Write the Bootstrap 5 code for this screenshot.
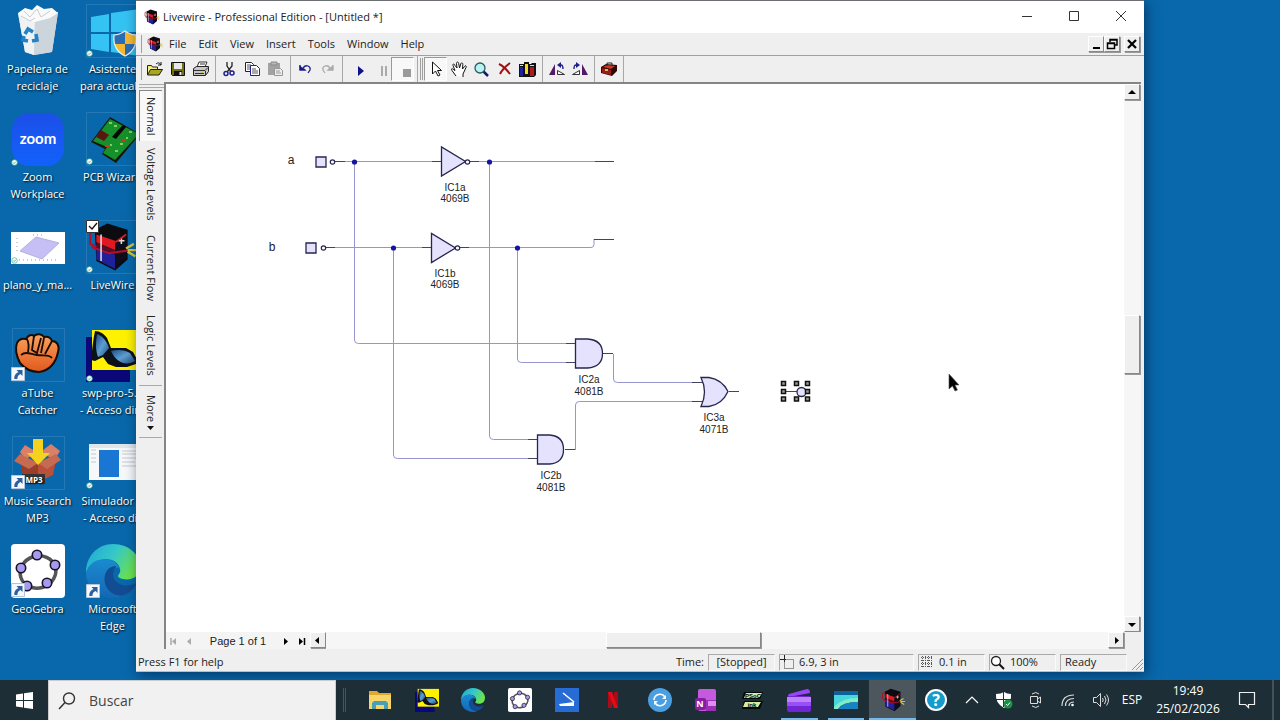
<!DOCTYPE html>
<html lang="es">
<head>
<meta charset="utf-8">
<meta name="viewport" content="width=device-width, initial-scale=1">
<title>Livewire - Professional Edition</title>
<link href="https://cdn.jsdelivr.net/npm/bootstrap@5.3.0/dist/css/bootstrap.min.css" rel="stylesheet">
<style>
  :root { --ui: "Open Sans", "Noto Sans", sans-serif; --face: #efefef; --shade: #a0a0a0; }
  body { font-family: var(--ui); font-size: 11px; line-height: 16px; color: #222; background: #0868ab; }
  button { font: inherit; color: inherit; background: none; border: 0; padding: 0; }
  svg { display: block; flex-shrink: 0; }

  /* Desktop */
  .desk-icons { grid-template-columns: 75px 75px; grid-auto-rows: 108px; width: 150px; padding-top: 4px; }
  .desk-item { color: #fff; text-shadow: 1px 1px 2px #000; text-decoration: none; display: flex; flex-direction: column; align-items: center; text-align: center; line-height: 17px; white-space: nowrap; }
  .desk-item:hover { color: #fff; }
  .desk-item svg { width: 54px; height: 54px; margin-bottom: 2px; }

  /* Application window */
  .app-win { inset: 0 136px 8px 136px; background: var(--face); border-top: 1px solid #6b6f73; border-bottom: 1px solid #8ad0e0; box-shadow: 2px 3px 12px rgba(0,20,50,.55); }
  .title-bar { height: 32px; background: #fff; padding-left: 8px; gap: 3px; }
  .title-bar .controls button { width: 47px; height: 30px; }
  .menu-bar { height: 23px; padding-left: 5px; border-bottom: 1px solid var(--shade); }
  .menu-bar .menu-item { padding: 0 6px; }
  .grip { width: 2px; border-left: 1px solid var(--shade); align-self: stretch; margin: 2px 0; }
  .mdi button, .sb-btn { width: 16px; height: 16px; background: var(--face); border: 1px solid; border-color: #fff #888 #888 #fff; box-shadow: 1px 1px 0 #999; }
  .tool-bar { height: 26px; padding-left: 5px; }
  .tool-bar button { width: 23px; height: 24px; display: flex; align-items: center; justify-content: center; }
  .tool-bar .pressed { background: #f8f8f8; border: 1px solid; border-color: #999 #fff #fff #999; }
  .tb-sep { width: 6px; height: 26px; background: linear-gradient(#a8a8a8,#a8a8a8) 3px 0 / 1px 100% no-repeat; }

  .work-area { padding-right: 3px; }
  .side-tabs { width: 28px; padding-left: 3px; }
  .side-tabs button { writing-mode: vertical-rl; width: 23px; text-align: left; line-height: 20px; padding: 7px 0; }
  .side-tabs .on { background: #f8f8f8; border-left: 1px solid #888; border-top: 1px solid #888; padding: 6px 0; }
  .side-grip { height: 4px; border: 1px solid #aaa; border-width: 1px 0; margin: 2px 0; }
  .side-tabs .more-tab { border: 1px solid #aaa; border-width: 1px 0; margin-top: 2px; padding: 9px 0 6px; }
  .view { border-left: 2px solid #858585; border-top: 2px solid #858585; }
  .sheet { background: #fff; }
  .sheet svg text { font-family: "Liberation Sans", Arial, sans-serif; font-size: 10px; fill: #222; text-anchor: middle; }
  .sheet svg .net-name { font-size: 12px; }
  .track { background: #f6f6f6; }
  .v-bar { width: 17px; }
  .h-bar { height: 17px; }
  .thumb { background: var(--face); border: 1px solid; border-color: #fff #888 #888 #fff; box-shadow: 1px 1px 0 #999; }
  .pager { width: 144px; background: #f4f4f4; font-family: "Liberation Sans", Arial, sans-serif; }
  .pager button { width: 16px; height: 16px; }

  .status-bar { height: 18px; margin-top: 4px; padding-left: 2px; }
  .cellbox { height: 17px; border: 1px solid; border-color: #aaa #fafafa #fafafa #aaa; }

  /* Taskbar */
  .task-bar { height: 40px; background: #1e2e36; color: #fff; font-size: 12px; }
  .task-bar button { height: 40px; display: flex; align-items: center; justify-content: center; }
  .find-box { width: 288px; background: #f1f1f1; border: 1px solid #ccc; border-bottom: 0; }
  .find-box input { background: none; border: 0; outline: 0; padding: 0; font-size: 14px; width: 200px; color: #333; }
  .find-box input::placeholder { color: #444; opacity: 1; }
  .pinned { width: 559px; }
  .pinned button { flex: 1 1 0; position: relative; }
  .pinned .running::after { content: ""; position: absolute; bottom: 0; left: 5px; right: 5px; height: 2px; background: #76b9ed; }
  .pinned .focused { background: #4b575d; }
  .pinned .focused::after { left: 0; right: 0; }
  .tray button { width: 32px; }
</style>
</head>
<body>
<svg width="0" height="0" class="position-absolute" aria-hidden="true">
  <defs>
    <linearGradient id="edgeTop" x1="0" y1="0" x2="1" y2=".4"><stop offset="0" stop-color="#1fa5d8"/><stop offset=".55" stop-color="#35c8c8"/><stop offset="1" stop-color="#6be34f"/></linearGradient>
    <linearGradient id="edgeLow" x1="0" y1="0" x2="0" y2="1"><stop offset="0" stop-color="#1a8bd0"/><stop offset="1" stop-color="#1467b4"/></linearGradient>
    <linearGradient id="zoomFill" x1="0" y1="0" x2="0" y2="1"><stop offset="0" stop-color="#1c4fe8"/><stop offset="1" stop-color="#1261fb"/></linearGradient>
    <linearGradient id="paw" x1="0" y1="0" x2="0" y2="1"><stop offset="0" stop-color="#f9a35c"/><stop offset="1" stop-color="#e1581c"/></linearGradient>
    <linearGradient id="wing" x1="0" y1="0" x2="1" y2="1"><stop offset="0" stop-color="#1d4c88"/><stop offset=".5" stop-color="#5d9fd2"/><stop offset="1" stop-color="#1f4a7c"/></linearGradient>
    <symbol id="synced" viewBox="0 0 8 8"><circle cx="4" cy="4" r="3.200" fill="#fff" stroke="#3bb58a" stroke-width=".8"/><path d="M2.400 4l1.200 1.200 2-2.200" fill="none" stroke="#2a9a70" stroke-width=".9"/></symbol>
    <symbol id="shortcut" viewBox="0 0 14 14"><path d="M.5.5h13v13H.5z" fill="#f4f7fb" stroke="#b5c5d8"/><path d="M5.500 3H11.500V9L9.600 7.100C7.500 8 6.400 9.500 6.400 12H3.300C2.900 8.600 4.600 6.300 7.400 5z" fill="#2f5e9e"/></symbol>
    <symbol id="lw" viewBox="0 0 32 32"><path d="M5 5l8-4 13 4v19l-8 7-12-6z" fill="#0c0c10"/><path d="M6 8l12 4v6L6 13z" fill="#e01820"/><path d="M6 13l12 5v3L6 16z" fill="#5a0c28"/><path d="M6 16l12 5v9L6 24z" fill="#20209a"/><path d="M18 13l7-5v15l-7 6z" fill="#0e0e1c"/><path d="M5 6L2 7v7l4 2M3 16l11 4 14-2" fill="none" stroke="#b01028" stroke-width="1.300"/><path d="M9 8v17M20 12h4M22 10v4" stroke="#ddd" fill="none"/><path d="M18 13l7-5" stroke="#e02030"/><path d="M25 17l5-3M26 18h6M26 19l5 3" stroke="#d8c838" stroke-width="1.500"/></symbol>
    <symbol id="edge" viewBox="0 0 32 32"><path d="M0 17C0 7 7 0 16 0c10 0 16 7 16 13 0 5-3 8-8 8-3 0-5-1-5-2s2-2 1-5c-1-3-4-5-8-5C6 9 2 12 0 17z" fill="url(#edgeTop)"/><path d="M0 17C2 11 6 9 11 9c5 0 8 2 9 6-3-3-9-1-9 6 0 5 4 9 10 10-2 1-4 1-5 1C7 32 0 25 0 17z" fill="url(#edgeLow)"/><path d="M18 13c-4 0-7 3-7 8 0 6 6 11 12 9 3-1 6-4 7-7-7 4-14 0-14-5 0-2 1-4 2-5z" fill="#124c92"/></symbol>
    <symbol id="ggb" viewBox="0 0 54 54"><rect width="54" height="54" rx="4" fill="#fff"/><ellipse cx="27" cy="28" rx="18" ry="16" transform="rotate(-18 27 28)" fill="none" stroke="#555" stroke-width="3.500"/><g fill="#a59af0" stroke="#171525" stroke-width="1.600"><circle cx="26" cy="11" r="4.700"/><circle cx="44" cy="21" r="4.700"/><circle cx="36" cy="39" r="4.700"/><circle cx="16" cy="42" r="4.700"/><circle cx="10" cy="24" r="4.700"/></g></symbol>
    <symbol id="fly" viewBox="0 0 54 54"><path d="M0 9h44v45H0z" fill="#0a0878"/><path d="M6 2h48v40H6z" fill="#fff200"/><path d="M9 3c5 0 9 3 12 7l4 10 15 0 7 4 5 9-2 3-9 3-11 0-8-3-5-7-8 4-4-1C6 23 7 12 9 3z" fill="#0c1018"/><path d="M11 6c6 2 10 8 12 14l-6 7-5 2c-3-8-2-16-1-23z" fill="url(#wing)"/><path d="M25 23c7-2 14-1 19 2l5 8c-8 5-18 3-24-10z" fill="url(#wing)"/></symbol>
  </defs>
</svg>

<div class="d-flex flex-column vh-100 overflow-hidden">
  <main class="flex-grow-1 position-relative overflow-hidden">
    <nav class="desk-icons d-grid" aria-label="Escritorio">
      <a class="desk-item" href="#"><svg viewBox="0 0 54 54"><path d="M7 9l40-1-6 40-18 3-9-3z" fill="#dce3e8"/><path d="M7 9l17 5-1 37-9-3z" fill="#eef2f4"/><path d="M24 14l23-6-6 40-18 3z" fill="#ccd5dc"/><path d="M7 9l7-5 7 2 5-5 7 4 8-1 6 5-8 5-15 4-12-3z" fill="#fafafa"/><path d="M13 7l6 6 7-8 4 8 9-6M10 12l9 5 5-3" fill="none" stroke="#c5ccd2"/><g fill="none" stroke="#2481c4" stroke-width="3.600"><path d="M14 30l3-5 5 3M25 30l1 6-5 1M17 37l-5-1 1-4"/></g></svg><span>Papelera de<br>reciclaje</span></a>
      <a class="desk-item" href="#"><svg viewBox="0 0 54 54"><path d="M.5.5h53v53H.5z" fill="none" stroke="#3a83bc" stroke-opacity=".6"/><path d="M5 13l18-3v18H5zM25 9l29-4v23H25zM5 30h18v18l-18-3zM25 30h29v22l-29-4z" fill="#35c3f3"/><path d="M39 27v13H28.500c-.7-3-.6-6-.5-9 5 0 8-2 11-4zM39 40h10c-1 5-5 9-10 12z" fill="#2a6db5"/><path d="M39 27c3 2 6 4 11 4 .3 3 0 6-1 9H39zM28.500 40H39v12c-6-3-9-7-10.500-12z" fill="#f6b82e"/><path d="M28 31c5 0 8-2 11-4 3 2 6 4 11 4 1 10-3 17-11 21-8-4-12-11-11-21z" fill="none" stroke="#eee" stroke-width="1.200"/><use href="#synced" x="0" y="46" width="7" height="7"/></svg><span>Asistente<br>para actualiz</span></a>
      <a class="desk-item" href="#"><svg viewBox="0 0 54 54"><rect x="1" y="1" width="52" height="53" rx="17" fill="url(#zoomFill)"/><text x="27" y="32" text-anchor="middle" font-family="Lato, sans-serif" font-weight="700" font-size="15" fill="#fff" style="text-shadow:none">zoom</text><use href="#synced" x="0" y="47" width="7" height="7"/></svg><span>Zoom<br>Workplace</span></a>
      <a class="desk-item" href="#"><svg viewBox="0 0 54 54"><path d="M.5.500h53v53H.5z" fill="none" stroke="#3a83bc" stroke-opacity=".6"/><path d="M24 5l30 17-24 29-14-9 3-5-14-7z" fill="#151a08"/><path d="M24 7l29 15-24 26-12-7 4-6-14-6z" fill="#16902a"/><path d="M15 18l8 5-5 6-8-4z" fill="#5c1410"/><path d="M32 18l5-5 3 2-10 12-4-2z" fill="#080808"/><g fill="#7fd060"><path d="M23 10h3v2h-3zM28 13h3v2h-3zM43 19h3v2h-3zM34 31h3v2h-3zM29 38h3v2h-3zM24 32h2v2h-2zM40 25h2v2h-2z"/></g><path d="M19 33h4v2h-4zM36 27h4v2h-4z" fill="#cf3a22"/><use href="#synced" x="0" y="46" width="7" height="7"/></svg><span>PCB Wizard</span></a>
      <a class="desk-item" href="#"><svg viewBox="0 0 54 54"><path d="M0 12h54v32H0z" fill="#fff"/><path d="M9 31l16-14 23 6-17 16z" fill="#c5bff5" stroke="#b4b0e0"/><path d="M22 15h10M6 18v14M8 40h40" stroke="#999" stroke-dasharray="1 3"/><use href="#synced" x="0" y="37" width="7" height="7"/></svg><span>plano_y_ma...</span></a>
      <a class="desk-item" href="#"><svg viewBox="0 0 54 54"><path d="M.5.500h53v53H.5z" fill="none" stroke="#3a83bc" stroke-opacity=".6"/><use href="#lw" x="1" y="2" width="50" height="50"/><path d="M.5.500h12v12H.5z" fill="#fff" stroke="#333"/><path d="M3 6l3 3 5-6" fill="none" stroke="#111" stroke-width="1.300"/><use href="#synced" x="0" y="46" width="7" height="7"/></svg><span>LiveWire</span></a>
      <a class="desk-item" href="#"><svg viewBox="0 0 54 54"><path d="M1.500.500h52v53h-52z" fill="none" stroke="#3a83bc" stroke-opacity=".6"/><path d="M9 35C5 27 4 20 6 15c2-4 5-5 9-4 2-4 6-5 8-3 3-3 8-2 10 1 4-1 7 1 8 4 5 0 8 5 6 11-2 11-9 19-19 20-8 0-14-3-19-9z" fill="url(#paw)" stroke="#1a0c05" stroke-width="2"/><path d="M16 11c2 4 2 8 1 13M23 8l-2 14 5 3 4-15M33 10l-3 15M41 13l-7 13M10 27c5-4 9-1 16 0s12-1 15 3" fill="none" stroke="#1a0c05" stroke-width="1.800"/><use href="#shortcut" x="0" y="39" width="14" height="14"/></svg><span>aTube<br>Catcher</span></a>
      <a class="desk-item" href="#"><svg viewBox="0 0 54 54"><use href="#fly" width="54" height="54"/><use href="#synced" x="0" y="47" width="7" height="7"/></svg><span>swp-pro-5.5<br>- Acceso dire</span></a>
      <a class="desk-item" href="#"><svg viewBox="0 0 54 54"><path d="M1.500.500h52v53h-52z" fill="none" stroke="#3a83bc" stroke-opacity=".6"/><path d="M9 23l18 5 18-5-3 16-15 7-15-6z" fill="#9a3e2b"/><path d="M27 28l18-5-3 16-15 7z" fill="#b9513a"/><path d="M14 9l-5 7 5 7 13-6zM40 8l9 7-5 8-16-6z" fill="#d88068"/><path d="M9 18l-6 7 15 8 9-6zM45 18l5 6-14 9-9-6z" fill="#c76a52"/><path d="M22 3h10v14h7L27 29 16 17h6z" fill="#f5d21d"/><path d="M11 38h23v10H11z" fill="#333"/><text x="23" y="47" text-anchor="middle" font-family="Open Sans, sans-serif" font-size="8" font-weight="700" fill="#fff">MP3</text><use href="#shortcut" x="0" y="39" width="14" height="14"/></svg><span>Music Search<br>MP3</span></a>
      <a class="desk-item" href="#"><svg viewBox="0 0 54 54"><path d="M3 8h51v36H3z" fill="#f6f8fa"/><path d="M3 8h51v4H3z" fill="#dfe6ec"/><path d="M13 14h20v27H13z" fill="#1976d2"/><path d="M5 14h5M5 18h5M5 22h5M5 26h5M36 15h16M36 18h14M36 22h16M36 26h13M36 30h16" stroke="#c4c9d0"/><use href="#synced" x="0" y="46" width="7" height="7"/></svg><span>Simulador P<br>- Acceso dir</span></a>
      <a class="desk-item" href="#"><svg viewBox="0 0 54 54"><use href="#ggb" width="54" height="54"/><use href="#shortcut" x="0" y="39" width="14" height="14"/></svg><span>GeoGebra</span></a>
      <a class="desk-item" href="#"><svg viewBox="0 0 54 54"><use href="#edge" width="54" height="54"/><use href="#shortcut" x="0" y="40" width="14" height="14"/></svg><span>Microsoft<br>Edge</span></a>
    </nav>

    <section class="app-win position-absolute d-flex flex-column">
      <header class="title-bar d-flex align-items-center">
        <svg width="16" height="16"><use href="#lw" width="16" height="16"/></svg>
        <span class="me-auto text-nowrap">Livewire - Professional Edition - [Untitled *]</span>
        <div class="controls d-flex">
          <button aria-label="Minimize"><svg class="mx-auto" width="12" height="12"><path d="M1 5.500h10" stroke="#333"/></svg></button>
          <button aria-label="Maximize"><svg class="mx-auto" width="12" height="12"><path d="M1.500.500h9v9h-9z" fill="none" stroke="#333"/></svg></button>
          <button aria-label="Close"><svg class="mx-auto" width="12" height="12"><path d="M1 0l10 10M11 0L1 10" stroke="#333"/></svg></button>
        </div>
      </header>
      <div class="menu-bar d-flex align-items-center">
        <div class="grip"></div>
        <svg width="16" height="16" class="ms-1"><use href="#lw" width="16" height="16"/></svg>
        <button class="menu-item">File</button><button class="menu-item">Edit</button><button class="menu-item">View</button><button class="menu-item">Insert</button><button class="menu-item">Tools</button><button class="menu-item">Window</button><button class="menu-item">Help</button>
        <div class="mdi ms-auto d-flex pe-1">
          <button aria-label="Minimize document"><svg width="14" height="14"><path d="M4 11h7" stroke="#000" stroke-width="2"/></svg></button>
          <button aria-label="Restore document" class="me-1"><svg width="14" height="14"><path d="M5 5V2.500h7V8h-2M5 3h7M2.500 6h7v5.500h-7zM2 6.500h8" fill="none" stroke="#000" stroke-width="1.500"/></svg></button>
          <button aria-label="Close document"><svg width="14" height="14"><path d="M3 3l8 8M11 3l-8 8" stroke="#000" stroke-width="2.200"/></svg></button>
        </div>
      </div>
      <div class="tool-bar d-flex align-items-center">
        <div class="grip"></div>
        <button aria-label="Open"><svg width="18" height="16"><path d="M1.500 14V4.500h4l1 1.500h5v3" fill="#f4f080" stroke="#222"/><path d="M1.500 14l3-5.500h12L13 14z" fill="#a8a820" stroke="#222"/><path d="M10 3c2-2 4-1 5 1m0-3v3h-3" fill="none" stroke="#111"/></svg></button>
        <button aria-label="Save"><svg width="16" height="16"><path d="M1.500 1.500h13v13h-12l-1-1z" fill="#707018" stroke="#111"/><path d="M4 2h8v6H4z" fill="#e8e8e8"/><path d="M4 10h8v5H4z" fill="#111"/><path d="M9.500 11h2v3h-2z" fill="#eee"/></svg></button>
        <button aria-label="Print"><svg width="18" height="16"><path d="M5 6l2-5h8l-2 5z" fill="#fff" stroke="#333"/><path d="M1.500 7.500l3-2h12v5l-3 4h-12z" fill="#c8c8c8" stroke="#222"/><path d="M2 9.500h11l3-3M3 12.500h9M8 3h5M13.500 10v4" fill="none" stroke="#333"/><path d="M9 11h2v1H9z" fill="#dcc720"/></svg></button>
        <div class="tb-sep"></div>
        <button aria-label="Cut"><svg width="14" height="16"><path d="M4 1v4l4 6M9 1v4l-5 6" fill="none" stroke="#222" stroke-width="1.300"/><circle cx="3" cy="12.500" r="2" fill="none" stroke="#22228e" stroke-width="1.500"/><circle cx="9" cy="12" r="2" fill="none" stroke="#22228e" stroke-width="1.500"/></svg></button>
        <button aria-label="Copy"><svg width="16" height="16"><path d="M.5 1.500h6l2 2v7h-8z" fill="#fff" stroke="#222"/><path d="M5.500 4.500h6l3 3v7h-9z" fill="#fff" stroke="#22228e"/><path d="M2 4h4M2 6h3M2 8h3M7 8h4M7 10h6M7 12h6" stroke="#555"/></svg></button>
        <button aria-label="Paste"><svg width="16" height="16"><path d="M0 2h12v12H0z" fill="#a2a2a2"/><path d="M3 1h6v3H3z" fill="#b8b8b8" stroke="#888"/><path d="M6.500 7.500h6l2 2v5h-8z" fill="#eee" stroke="#969696"/><path d="M8 10h4M8 12h5" stroke="#999"/></svg></button>
        <div class="tb-sep"></div>
        <button aria-label="Undo"><svg width="16" height="16"><path d="M3 4v5h5L6 7c3-4 8-2 7 2l-2 3" fill="none" stroke="#22228e" stroke-width="1.300"/><path d="M2.500 4v5h5z" fill="#16168a"/></svg></button>
        <button aria-label="Redo"><svg width="16" height="16"><path d="M13 4v5H8l2-2C7 3 2 5 3 9l2 3" fill="none" stroke="#aaa" stroke-width="1.300"/><path d="M13 4v5H8z" fill="#aaa"/></svg></button>
        <div class="tb-sep"></div>
        <button aria-label="Run"><svg width="18" height="18"><path d="M10 6v10l6-5z" fill="#10108a"/></svg></button>
        <button aria-label="Pause"><svg width="18" height="18"><path d="M11 6v10M15 6v10" stroke="#aaa" stroke-width="2"/></svg></button>
        <button aria-label="Stop" class="pressed"><svg width="18" height="18"><path d="M9 9h8v8H9z" fill="#9a9a9a"/></svg></button>
        <div class="tb-sep"></div>
        <div class="grip"></div><div class="grip"></div>
        <button aria-label="Select" class="pressed"><svg width="14" height="16"><path d="M3.500 1v12l3-3 2.500 5 2-1-2.500-4.500h4z" fill="#fff" stroke="#111"/></svg></button>
        <button aria-label="Pan"><svg width="18" height="17"><path d="M6 15L2 9.500C.5 7.500 2.500 7 4 9L5 9.500 3 4.500c-.5-2 1.500-2 2 0L7 7 6.500 2.500c0-2 2-2 2.200 0L9.500 7l1.300-4c.5-2 2.300-1 2 .5L12.500 8l2-2.500c1-1.500 2.500-.5 1.500 1L13 13v3" fill="#fff" stroke="#111"/></svg></button>
        <button aria-label="Zoom"><svg width="17" height="17"><path d="M10 10l5 5" stroke="#18186e" stroke-width="2.500"/><circle cx="7" cy="7" r="5" fill="#baf3ee" stroke="#255b66" stroke-width="1.300"/></svg></button>
        <button aria-label="Delete"><svg width="16" height="16"><path d="M2 3c4 2 8 6 11 10M13 2C9 5 5 9 3 13" fill="none" stroke="#a01010" stroke-width="2"/></svg></button>
        <button aria-label="Gallery"><svg width="18" height="16"><path d="M0 3h5V1h5v2h2l1-1h4v12l-2 2H0z" fill="#111"/><path d="M1 6h3v9H1z" fill="#2020a0"/><path d="M1 4h3v1H1zM11 4h4v1h-4z" fill="#ddd"/><path d="M6 3h3v10H6z" fill="#f0dd20"/><path d="M11 6h4v9h-4z" fill="#b51818"/></svg></button>
        <div class="tb-sep"></div>
        <button aria-label="Rotate left"><svg width="18" height="16"><path d="M1 14L7 3v11z" fill="#521a68"/><path d="M9.500 13.500v-4l7 4z" fill="#fff" stroke="#333"/><path d="M11 4h2c2 0 2 2 2 4" fill="none" stroke="#20208a" stroke-width="1.400"/><path d="M9 4l4-3v6z" fill="#20208a"/></svg></button>
        <button aria-label="Rotate right"><svg width="18" height="16"><path d="M17 14L11 3v11z" fill="#521a68"/><path d="M8.500 13.500v-4l-7 4z" fill="#fff" stroke="#333"/><path d="M7 4H5C3 4 3 6 3 8" fill="none" stroke="#20208a" stroke-width="1.400"/><path d="M9 4L5 1v6z" fill="#20208a"/></svg></button>
        <div class="tb-sep"></div>
        <button aria-label="Toolbox"><svg width="18" height="16"><path d="M1 6l5-3 11 1v6l-5 5-11-3z" fill="#2e0906"/><path d="M2 7l9 2v5l-9-2z" fill="#991c18"/><path d="M3 6l4-2 8 1-4 3z" fill="#c93a25"/><path d="M7 5V2h5v3" fill="none" stroke="#222"/><path d="M5 8h3v2H5z" fill="#d6bd4b"/></svg></button>
        <div class="tb-sep"></div>
      </div>

      <div class="work-area d-flex flex-grow-1 overflow-hidden">
        <nav class="side-tabs d-flex flex-column flex-shrink-0" aria-label="Views">
          <div class="side-grip"></div>
          <button class="on">Normal</button><button>Voltage Levels</button><button>Current Flow</button><button>Logic Levels</button>
          <button class="more-tab d-flex align-items-center gap-1">More <svg width="7" height="5"><path d="M0 0h7L3.500 4z" fill="#111"/></svg></button>
        </nav>
        <div class="view flex-grow-1 d-flex flex-column overflow-hidden">
          <div class="d-flex flex-grow-1 overflow-hidden">
            <div class="sheet flex-grow-1 overflow-hidden">
              <svg width="958" height="548" viewBox="166 84 958 548" fill="none" role="img" aria-label="Circuit">
                <g stroke="#9595cf">
                  <path d="M344 161.500h97M478 161.500h136M333 247.500h98M467 247.500h124q3 0 3-3v-5.500"/>
                  <path d="M354.500 162v178q0 3.500 4 3.500h217"/>
                  <path d="M393.500 248v207q0 3.500 4 3.500h140"/>
                  <path d="M489.500 162v274q0 3.500 4 3.500h44"/>
                  <path d="M517.500 248v111q0 3.500 4 3.500h54"/>
                  <path d="M613.500 354v25q0 3.500 4 3.500h84"/>
                  <path d="M575.500 450v-45q0-3.500 4-3.500h122"/>
                </g>
                <g stroke="#44445f">
                  <path d="M335 161.500h10M432 161.500h9M470 161.500h9M595 161.500h19M326 247.500h9M422 247.500h9M460 247.500h9M594 239.500h20"/>
                  <path d="M566 343.500h9M566 362.500h9M603 353.500h10M528 439.500h9M528 458.500h9M565 449.500h10M692 382.500h11M692 401.500h11M729 391.500h10M783 391.500h14"/>
                </g>
                <g fill="#e4e2fc" stroke="#26264f" stroke-width="1.300">
                  <path d="M316 157h10v10h-10zM306 243h10v10h-10z"/>
                  <path d="M441.500 147v29l24-14.500zM431.500 233.500v29l24-14.500z"/>
                  <path d="M575.500 339h12q15 1 15 14.500t-15 14.500h-12zM537.500 435h12q14 1 14 14.500t-14 14.500h-12z"/>
                  <path d="M701 377.500h8q13 2 19 14-6 13-19 15h-8q7-14.500 0-29z"/>
                  <circle cx="801.500" cy="392" r="4.500"/>
                </g>
                <g fill="#fff" stroke="#26264f" stroke-width="1.200"><circle cx="332.500" cy="162" r="2.200"/><circle cx="323.500" cy="248" r="2.200"/><circle cx="467.500" cy="162" r="2.200"/><circle cx="457.500" cy="248" r="2.200"/></g>
                <g fill="#1414a0"><circle cx="354.500" cy="162" r="2.600"/><circle cx="489.500" cy="162" r="2.600"/><circle cx="393.500" cy="248" r="2.600"/><circle cx="517.500" cy="248" r="2.600"/></g>
                <path d="M781.500 381.500h4v4h-4zM794.500 381.500h4v4h-4zM805.500 381.500h4v4h-4zM781.500 389.500h4v4h-4zM805.500 389.500h4v4h-4zM781.500 397h4v4h-4zM794.500 397h4v4h-4zM805.500 397h4v4h-4z" fill="#999" stroke="#111" stroke-width="1.500"/>
                <g>
                  <text x="291" y="164" class="net-name">a</text><text x="272" y="251" class="net-name">b</text>
                  <text x="455" y="191">IC1a</text><text x="455" y="202">4069B</text>
                  <text x="445" y="277">IC1b</text><text x="445" y="288">4069B</text>
                  <text x="589" y="383">IC2a</text><text x="589" y="395">4081B</text>
                  <text x="551" y="479">IC2b</text><text x="551" y="491">4081B</text>
                  <text x="714" y="421">IC3a</text><text x="714" y="433">4071B</text>
                </g>
                <path d="M949 374v15l3.500-3 2.500 5 2.500-1-2.500-5h4z" fill="#000" stroke="#555" stroke-width=".6"/>
              </svg>
            </div>
            <div class="v-bar track d-flex flex-column flex-shrink-0">
              <button class="sb-btn" aria-label="Scroll up"><svg width="14" height="14"><path d="M3 9h8L7 5z"/></svg></button>
              <div style="flex:214"></div><div class="thumb" style="height:59px;width:16px"></div><div style="flex:241"></div>
              <button class="sb-btn" aria-label="Scroll down"><svg width="14" height="14"><path d="M3 6h8l-4 4z"/></svg></button>
            </div>
          </div>
          <div class="h-bar d-flex flex-shrink-0">
            <div class="pager d-flex align-items-center flex-shrink-0">
              <button aria-label="First page"><svg width="16" height="16"><path d="M5 5v7" stroke="#aaa" stroke-width="1.500"/><path d="M10 5L6 8.500l4 3.500z" fill="#aaa"/></svg></button>
              <button aria-label="Previous page"><svg width="16" height="16"><path d="M9 5L5 8.500 9 12z" fill="#aaa"/></svg></button>
              <span class="flex-grow-1 text-center text-nowrap">Page 1 of 1</span>
              <button aria-label="Next page"><svg width="16" height="16"><path d="M6 5l4 3.500L6 12z"/></svg></button>
              <button aria-label="Last page"><svg width="16" height="16"><path d="M5 5l4 3.500L5 12z"/><path d="M10.500 5v7" stroke="#000" stroke-width="1.500"/></svg></button>
            </div>
            <button class="sb-btn flex-shrink-0" aria-label="Scroll left"><svg width="14" height="14"><path d="M8 4L4 7.500 8 11z"/></svg></button>
            <div class="track d-flex flex-grow-1"><div style="flex:280"></div><div class="thumb" style="width:155px;height:16px"></div><div style="flex:347"></div></div>
            <button class="sb-btn flex-shrink-0" aria-label="Scroll right"><svg width="14" height="14"><path d="M6 4l4 3.500L6 11z"/></svg></button>
            <div class="v-bar flex-shrink-0"></div>
          </div>
        </div>
      </div>

      <footer class="status-bar d-flex align-items-center">
        <span class="me-auto">Press F1 for help</span>
        <span class="me-1">Time:</span>
        <div class="cellbox d-flex align-items-center justify-content-center me-1" style="width:67px">[Stopped]</div>
        <div class="cellbox d-flex align-items-center me-1" style="width:135px"><svg width="15" height="15" class="me-1"><path d="M4.500 0v7M0 4.500h6" stroke="#222" fill="none"/><path d="M4.500 4.500h9v9h-9z" fill="none" stroke="#333" stroke-dasharray="1 1"/></svg>6.9, 3 in</div>
        <div class="cellbox d-flex align-items-center me-1" style="width:67px"><svg width="16" height="15" class="me-1"><path d="M2 2.500h12M2 5.500h12M2 8.500h12M2 11.500h12M3.500 1v12M6.500 1v12M9.500 1v12M12.500 1v12" stroke="#555" stroke-dasharray="1 1"/></svg>0.1 in</div>
        <div class="cellbox d-flex align-items-center me-1" style="width:67px"><svg width="16" height="15" class="me-1"><circle cx="6" cy="6" r="4.500" fill="#fff" stroke="#222" stroke-width="1.300"/><path d="M9 9l5 5" stroke="#111" stroke-width="2"/></svg>100%</div>
        <div class="cellbox d-flex align-items-center ps-1" style="width:67px">Ready</div>
        <svg width="17" height="17" class="align-self-end"><path d="M5 16L16 5M9 16l7-7M13 16l3-3" stroke="#999"/></svg>
      </footer>
    </section>
  </main>

  <footer class="task-bar d-flex flex-shrink-0">
    <button aria-label="Inicio" style="width:48px"><svg width="17" height="17"><path d="M0 2.500l7-1V8H0zM8 1.300L17 0v8H8zM0 9h7v6.500l-7-1zM8 9h9v8l-9-1.300z" fill="#fff"/></svg></button>
    <label class="find-box d-flex align-items-center ps-2"><svg width="20" height="20" class="me-2"><circle cx="12" cy="7.500" r="5.500" fill="none" stroke="#333" stroke-width="1.400"/><path d="M8 11.500L2 18" stroke="#333" stroke-width="1.500"/></svg><input type="text" class="ms-1" placeholder="Buscar" aria-label="Buscar"></label>
    <svg width="21" height="40"><path d="M7.500 8v24M9.500 8v24" stroke="#47545a"/></svg>
    <div class="pinned d-flex">
      <button aria-label="Explorador"><svg width="24" height="24"><path d="M1 3h8l2 2h12v16H1z" fill="#e4a72e"/><path d="M1 7h22v14H1z" fill="#f7d568"/><path d="M4 21v-6l2-2h12l2 2v6h-4v-4H8v4z" fill="#4a9fb8"/></svg></button>
      <button aria-label="SWP"><svg width="24" height="24"><use href="#fly" width="24" height="24"/></svg></button>
      <button aria-label="Edge"><svg width="24" height="24"><use href="#edge" width="24" height="24"/></svg></button>
      <button aria-label="GeoGebra"><svg width="24" height="24"><use href="#ggb" width="24" height="24"/></svg></button>
      <button aria-label="Pizarra"><svg width="24" height="24"><path d="M0 0h24v24H0z" fill="#276bd5"/><path d="M8 5l11 9" stroke="#fff" stroke-width="1.500"/><path d="M4 16l15-2v4H5z" fill="#fff"/></svg></button>
      <button aria-label="Netflix"><svg width="24" height="24"><path d="M7 4h4v16H7zM13 4h4v16h-4z" fill="#a90c16"/><path d="M7 4h4l6 16h-4z" fill="#e30b17"/></svg></button>
      <button aria-label="Sincronizar"><svg width="24" height="24"><circle cx="12" cy="12" r="12" fill="#4a9fe0"/><path d="M6 12a6 6 0 0 1 11-3M18 12a6 6 0 0 1-11 3" fill="none" stroke="#fff" stroke-width="1.600"/><path d="M18 7v4h-4zM6 17v-4h4z" fill="#fff"/></svg></button>
      <button aria-label="OneNote"><svg width="24" height="24"><rect x="4" y="1" width="18" height="22" rx="2" fill="#c45ade"/><path d="M12 12h10v11H12z" fill="#9a30b4"/><path d="M14 13h8v5h-8z" fill="#e18df0"/><rect x="1" y="10" width="11" height="12" rx="2" fill="#8a1ca1"/><text x="6" y="19" text-anchor="middle" font-family="Open Sans, sans-serif" font-weight="700" font-size="9" fill="#fff">N</text></svg></button>
      <button aria-label="PSoC"><svg width="24" height="24"><path d="M3 4h19l-3 7H1zM3 13h19l-3 8H1z" fill="#050805"/><path d="M5 5h16l-3 5H3zM4 14h16l-3 5H2z" fill="#d5eda0"/><text x="12" y="10" text-anchor="middle" font-family="Liberation Sans, sans-serif" font-weight="700" font-size="6">PSoC</text><text x="11" y="19" text-anchor="middle" font-family="Liberation Sans, sans-serif" font-weight="700" font-size="6">ink</text></svg></button>
      <button class="running" aria-label="Clipchamp"><svg width="24" height="24"><path d="M2 6l18-5q3 0 3 4L2 9q-2-1 0-3z" fill="#9845f5"/><rect x="0" y="8" width="24" height="16" rx="2" fill="#7026d2"/><path d="M0 9h24v5H0z" fill="#bc83fa"/><path d="M0 14h24v4H0z" fill="#9a4ff4"/></svg></button>
      <button class="running" aria-label="Remoto"><svg width="24" height="20"><path d="M0 1h24v18H0z" fill="#0b629c"/><path d="M0 5h24v4Q12 7 0 19z" fill="#46d7de"/><path d="M0 17Q8 8 24 8v4Q8 12 4 19H0z" fill="#82edc4"/><path d="M4 19q8-8 20-7v7z" fill="#1883c3"/></svg></button>
      <button class="running focused" aria-label="Livewire"><svg width="24" height="24"><use href="#lw" width="24" height="24"/></svg></button>
    </div>
    <div class="tray d-flex ms-auto">
      <button aria-label="Ayuda" class="me-1"><svg width="22" height="22"><circle cx="11" cy="11" r="10" fill="#179bca" stroke="#fff" stroke-width="2"/><text x="11" y="17" text-anchor="middle" font-family="Open Sans, sans-serif" font-weight="700" font-size="16" fill="#fff">?</text></svg></button>
      <button aria-label="Iconos ocultos"><svg width="14" height="10"><path d="M1 8l6-6 6 6" fill="none" stroke="#fff" stroke-width="1.200"/></svg></button>
      <button aria-label="Seguridad"><svg width="18" height="18"><path d="M1 3q5 0 8-2 3 2 7 2 1 9-7 14Q0 12 1 3z" fill="#fff"/><path d="M8.500 1v15M1 8.500h15" stroke="#1e2e36"/><circle cx="13" cy="13" r="4.500" fill="#159447"/><path d="M11 13l1.500 1.500L15 11.500" fill="none" stroke="#fff"/></svg></button>
      <button aria-label="Reunirse"><svg width="14" height="18"><path d="M1.500 5.500h7v7h-7zM8.500 8l3-2v6l-3-2zM3 3q4-3 7 0M3 15q4 3 7 0" fill="none" stroke="#ddd"/></svg></button>
      <button aria-label="Red"><svg width="16" height="16"><circle cx="12.500" cy="13" r="1.300" fill="#fff"/><path d="M2 14Q2 3 14 3M5.500 14Q5.500 6.500 14 6.500M9 14q0-4 5-4" fill="none" stroke="#ddd" stroke-width="1.200"/></svg></button>
      <button aria-label="Volumen"><svg width="17" height="16"><path d="M1.500 5.500h3l4-4v13l-4-4h-3zM10.500 6q1.500 2 0 4M12.500 4q3 4 0 8M14.500 2.500q4 5.500 0 11" fill="none" stroke="#ddd"/></svg></button>
      <button>ESP</button>
      <button class="flex-column" style="width:80px;line-height:18px"><span>19:49</span><span>25/02/2026</span></button>
      <button aria-label="Notificaciones" style="width:38px"><svg width="18" height="18"><path d="M1.500 1.500h15v12h-6v3l-3-3h-6z" fill="none" stroke="#eee" stroke-width="1.200"/></svg></button>
      <button aria-label="Mostrar escritorio" style="width:14px"><svg width="2" height="40"><path d="M1 0v40" stroke="#6a757a"/></svg></button>
    </div>
  </footer>
</div>
<script src="https://cdn.jsdelivr.net/npm/bootstrap@5.3.0/dist/js/bootstrap.bundle.min.js"></script>
</body>
</html>
